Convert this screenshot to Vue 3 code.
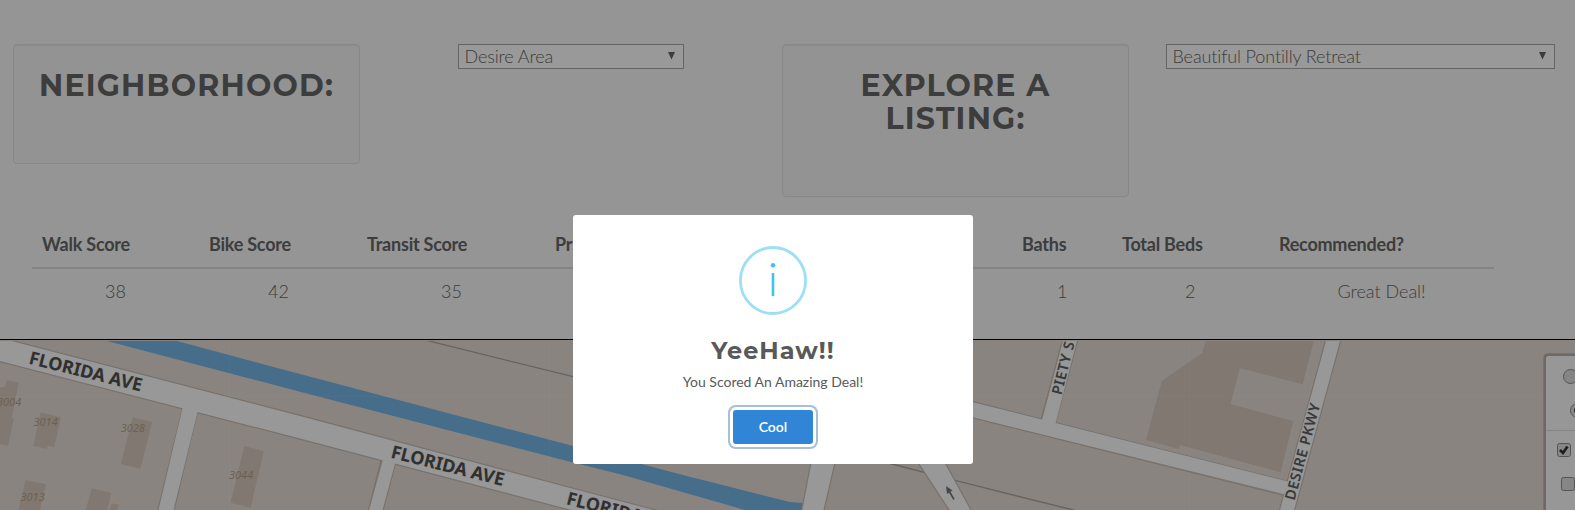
<script setup>
const columns = [
  { label: 'Walk Score', value: '38', indent: 63 },
  { label: 'Bike Score', value: '42', indent: 59 },
  { label: 'Transit Score', value: '35', indent: 74 },
  { label: 'Price', value: '', indent: 0 },
  { label: 'Baths', value: '1', indent: 35 },
  { label: 'Total Beds', value: '2', indent: 63 },
  { label: 'Recommended?', value: 'Great Deal!', indent: 58.5 },
]
</script>

<template>
  <div class="page">
    <main>
      <section class="filters">
        <div class="well"><h2>NEIGHBORHOOD:</h2></div>
        <div class="select area"><span>Desire Area</span><svg width="7" height="8"><path d="M0 0H7L3.5 7.5Z" /></svg></div>
        <div class="well tall"><h2>EXPLORE A<br>LISTING:</h2></div>
        <div class="select listing"><span>Beautiful Pontilly Retreat</span><svg width="7" height="8"><path d="M0 0H7L3.5 7.5Z" /></svg></div>
      </section>
      <section class="scores">
        <div class="row head"><div v-for="c in columns" :key="c.label">{{ c.label }}</div></div>
        <div class="row"><div v-for="c in columns" :key="c.label" :style="{ paddingLeft: c.indent + 'px' }">{{ c.value }}</div></div>
      </section>
    </main>

    <section class="map">
      <svg viewBox="0 341 1575 169" width="1575" height="169">
        <!-- canal -->
        <path class="water" d="M107 341H177L300 374L573 446L683 475L790 502L804 503V510H745L623 475L573 462.500L300 391.700Z" />
        <!-- rail lines -->
        <path class="rail" d="M425 340L573 376.700L888 463L960 481.700L1075 510.500" />
        <!-- buildings -->
        <g transform="translate(0 330) scale(.333333)" class="building">
          <path d="M20 150L56 158L35 265H42L24 348L0 342V172H14Z" />
          <path d="M122 247L183 262L163 352L143 347L140 357L100 348Z" />
          <path d="M398 262L457 275L421 417L362 402Z" />
          <path d="M733 348L792 363L752 533L691 518Z" />
          <path d="M77 450L138 463L120 540H55Z" />
          <path d="M275 475L334 488L322 540H257ZM336 520L357 525L352 540H328Z" />
        </g>
        <path class="building" transform="translate(960 330) scale(.333333)" d="M737 30H1062L1028 163L840 115L812 222L1000 273L962 427L660 345L657 357L558 330L605 153L727 68Z" />
        <!-- streets -->
        <g class="casing">
          <path d="M-2 337.500L300 416L590 493.300L665 513H583L300 438.500L-2 360.500Z" />
          <path d="M183.500 407L158 512H173L197 411Z" />
          <path d="M382 459L368.500 512H382L395 463Z" />
          <path d="M812 460L802 512H823L835 460Z" />
          <path d="M917 460L951 512H971.500L943 460Z" />
          <path d="M970 401.500L1286 481.500V495.300L970 416.500Z" />
          <path d="M1063.500 339L1041.500 420L1054.500 424.500L1077.500 339Z" />
          <path d="M1326.500 339L1279.500 512H1293.500L1340.500 339Z" />
        </g>
        <g class="street">
          <path d="M-2 337.500L300 416L590 493.300L665 513H583L300 438.500L-2 360.500Z" />
          <path d="M184 402L158 512H173L198 410Z" />
          <path d="M384 456L368.500 512H382L396 460Z" />
          <path d="M812 460L802 512H823L835 460Z" />
          <path d="M917 460L951 512H971.500L943 460Z" />
          <path d="M970 401.500L1288 481.500V495.300L970 416.500Z" />
          <path d="M1063.500 339L1041 424L1054.500 427L1077.500 339Z" />
          <path d="M1326.500 339L1279.500 512H1293.500L1340.500 339Z" />
        </g>
        <path class="arrow" d="M954 499.500L948.500 490" />
        <path d="M946 486L952.500 490.500L947 494Z" fill="#777" />
        <path class="seam" d="M229.500 341V510M549.500 341V510M1189.500 341V510M0 396.500H1540" />
        <!-- labels -->
        <g class="street-name">
          <text transform="translate(28 363.500) rotate(14)" textLength="116">FLORIDA AVE</text>
          <text transform="translate(390 457.500) rotate(14.200)" textLength="116">FLORIDA AVE</text>
          <text transform="translate(565.500 504) rotate(14.200)" textLength="116">FLORIDA AVE</text>
        </g>
        <g class="street-name minor">
          <text transform="translate(1061.500 395.500) rotate(-76)" textLength="54">PIETY S</text>
          <text transform="translate(1294.500 501) rotate(-75)" textLength="99.500">DESIRE PKWY</text>
        </g>
        <g class="number">
          <text x="-3" y="405.500">3004</text>
          <text x="33.500" y="426">3014</text>
          <text x="120.700" y="431.700">3028</text>
          <text x="229" y="478.500">3044</text>
          <text x="20.500" y="501">3013</text>
        </g>
        <!-- layer control -->
        <path d="M1580 353.300H1548.500Q1543.300 353.300 1543.300 358.500V512H1580Z" fill="#000" fill-opacity=".2" />
        <path d="M1580 356H1548.500Q1546 356 1546 358.500V512H1580Z" fill="#fcfcfc" />
        <path d="M1546 430.500H1575" stroke="#ddd" />
        <g class="control">
          <circle cx="1570.500" cy="376.500" r="7" />
          <circle cx="1577.500" cy="410.500" r="7" />
          <rect x="1557.500" y="443.500" width="13" height="13" rx="2" />
          <rect x="1561.500" y="477.500" width="13" height="13" rx="2" />
        </g>
        <circle cx="1577.500" cy="410.500" r="3.500" fill="#444" />
        <path d="M1560 450L1563 453L1567.500 446.500" fill="none" stroke="#333" stroke-width="2.700" />
      </svg>
    </section>

    <div class="overlay">
      <div class="modal">
        <svg class="info" width="68" height="69" viewBox="0 0 68 69">
          <ellipse cx="34" cy="34.500" rx="32.600" ry="33" fill="none" stroke="#9de0f6" stroke-width="2.800" />
          <circle cx="34" cy="19.200" r="2.300" fill="#3fc3ee" />
          <path d="M34 27V50" stroke="#3fc3ee" stroke-width="2.600" />
        </svg>
        <h3>YeeHaw!!</h3>
        <p>You Scored An Amazing Deal!</p>
        <button type="button">Cool</button>
      </div>
    </div>
  </div>
</template>

<style>
body { margin: 0; overflow: hidden; }
</style>

<style scoped>
.page { position: relative; width: 1575px; height: 510px; overflow: hidden; background: #f8f8f8; font-family: Lato, sans-serif; color: #666; }
main { box-sizing: border-box; height: 340px; padding-top: 44px; border-bottom: 1px solid #000; }
.filters { display: flex; align-items: flex-start; height: 176px; padding-left: 13px; }
.well { box-sizing: border-box; width: 347px; height: 120px; padding-top: 24px; border: 1px solid #e3e3e3; border-radius: 4px; background: #f5f5f5; box-shadow: inset 0 1px 1px rgba(0, 0, 0, .05); text-align: center; }
.tall { height: 153px; margin-left: 98px; }
h2 { margin: 0; font: 700 30px/33px Montserrat, Inter, sans-serif; letter-spacing: 1.2px; white-space: nowrap; }
.select { box-sizing: border-box; display: flex; align-items: center; justify-content: space-between; height: 25px; padding: 0 8px 2px 5.5px; border: 1px solid #a9a9a9; background: #fff; font-size: 18px; font-weight: 300; letter-spacing: -.12px; white-space: nowrap; }
.select svg { fill: #666; margin-top: 1px; }
.area { width: 226px; margin-left: 98px; }
.listing { width: 389px; margin-left: 37px; }
.scores { width: 1462px; margin-left: 32px; }
.row { display: grid; grid-template-columns: 167px 158px 188px 467px 100px 157px 1fr; padding-left: 10px; font-size: 18px; font-weight: 300; line-height: 26px; padding-top: 9px; white-space: nowrap; }
.head { height: 47px; box-sizing: border-box; margin-top: 2px; border-bottom: 2px solid #ddd; font-weight: 700; letter-spacing: -.23px; }
.map { height: 170px; padding-top: 1px; box-sizing: border-box; background: #e7ddd5; }
.map svg { display: block; }
.water { fill: #75b6e6; }
.building { fill: #d7c8bc; }
.rail { fill: none; stroke: #aaa5a0; stroke-width: 1.3; }
.street { fill: #fdfdfd; }
.casing { fill: none; stroke: #c6beb7; stroke-width: 2.4; }
.seam { stroke: #fff; stroke-opacity: .08; }
.arrow { fill: none; stroke: #777; stroke-width: 1.6; }
.street-name { font: 700 18px "Noto Sans", sans-serif; fill: #505050; stroke: #fafafa; stroke-width: 2; paint-order: stroke; }
.minor { font-size: 14.5px; font-weight: 600; fill: #606060; }
.number { font: italic 11px "Noto Sans", sans-serif; fill: #b8a088; }
.control { fill: #e0e0e0; stroke: #8c8c8c; stroke-width: 1; }
.overlay { position: absolute; inset: 0; background: rgba(0, 0, 0, .4); }
.modal { position: absolute; left: 573px; top: 215px; box-sizing: border-box; width: 400px; height: 249px; padding-top: 31px; border-radius: 3px; background: #fff; display: flex; flex-direction: column; align-items: center; color: #595959; }
.info { display: block; }
h3 { margin: 21px 0 0; font: 700 24px/30px Montserrat, Inter, sans-serif; letter-spacing: 1px; }
p { margin: 6px 0 0; font-size: 14px; line-height: 20px; }
button { width: 80px; height: 34px; margin-top: 18px; padding: 0 0 2px; border: 0; border-radius: 3px; background: #3085d6; box-shadow: 0 0 0 3px #fff, 0 0 0 5px #a9bfd8; color: #fff; font: 600 14px Lato, sans-serif; }
</style>
